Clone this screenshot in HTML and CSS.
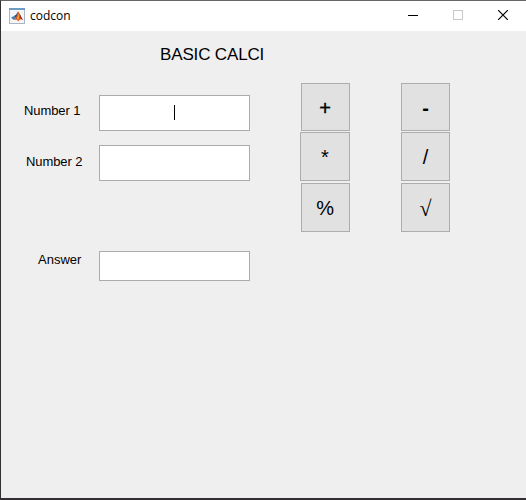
FILE: index.html
```
<!DOCTYPE html>
<html lang="en">
<head>
<meta charset="utf-8">
<title>codcon</title>
<link rel="stylesheet" href="styles.css">
</head>
<body>
<div class="window">
  <header class="titlebar">
    <svg class="app-icon" width="16" height="16" viewBox="0 0 16 16">
      <rect x=".5" y=".5" width="15" height="15" fill="#f3f5f7" stroke="#a9b5c2"/>
      <rect x="0" y="0" width="16" height="2" fill="#6d9cc4"/>
      <path d="M2 9.5 5 8l2 2-2.2 2z" fill="#3d7fb5"/>
      <path d="M5 8 7 6.8 9 3.5 8.5 8 7 10z" fill="#284a78"/>
      <path d="M9 3.2C10.5 4.5 11.5 9 14 12 12 10.7 11 11 9.2 13.5 8.5 11.7 7.5 11.5 4.8 12 7 10.5 8 7.5 9 3.2z" fill="#d9541e"/>
      <path d="M9.3 5 10 9.5 9.2 12.5 8 10.5z" fill="#f5a43a"/>
      <path d="M10.6 5.5 12.5 9.5 14 12 11.5 10.5z" fill="#8e261d"/>
    </svg>
    <span class="title">codcon</span>
    <div class="controls">
      <svg width="10" height="10" shape-rendering="crispEdges"><path d="M0 5.5h10" stroke="#000"/></svg>
      <svg width="10" height="10" shape-rendering="crispEdges"><rect x=".5" y=".5" width="9" height="9" fill="none" stroke="#c8c8c8"/></svg>
      <svg width="10" height="10"><path d="M0 0 10 10M10 0 0 10" stroke="#000" stroke-width="1.2"/></svg>
    </div>
  </header>
  <main class="client">
    <h1 class="heading">BASIC CALCI</h1>
    <div class="panel">
      <div class="form">
        <div class="field"><label class="label">Number 1</label><div class="input"><span class="caret"></span></div></div>
        <div class="field second"><label class="label">Number 2</label><div class="input"></div></div>
        <div class="field answer"><label class="label">Answer</label><div class="input"></div></div>
      </div>
      <div class="keypad">
        <button class="key plus"><span>+</span></button>
        <button class="key minus"><span>-</span></button>
        <button class="key wide"><span>*</span></button>
        <button class="key"><span>/</span></button>
        <button class="key last percent"><span>%</span></button>
        <button class="key last root"><span>√</span></button>
      </div>
    </div>
  </main>
</div>
</body>
</html>
```

FILE: styles.css
```
* { box-sizing: border-box; }
body { margin: 0; font-family: "Liberation Sans", Arial, sans-serif; color: #000; }
.window {
  height: 500px;
  border-top: 1px solid #666;
  border-left: 1px solid #332f33;
  border-bottom: 2px solid #332f33;
  background: #efefef;
}
.titlebar {
  display: flex;
  align-items: center;
  height: 30px;
  padding: 0 18px 0 8px;
  background: #fff;
}
.title {
  margin-left: 5px;
  font: 12px/16px "Open Sans", "Noto Sans", sans-serif;
}
.controls { display: flex; gap: 35px; margin: 0 0 2px auto; }
.controls svg { display: block; }
.heading {
  margin: 0;
  padding: 14px 0 0 159px;
  height: 52px;
  font-size: 17px;
  line-height: 20px;
  letter-spacing: -0.15px;
  font-weight: 400;
}
.panel { display: flex; }
.form { width: 249px; padding-top: 12px; }
.field { display: flex; height: 36px; }
.label {
  width: 98px;
  padding: 8px 0 0 23px;
  font-size: 13px;
  line-height: 16px;
  letter-spacing: -0.1px;
}
.input {
  display: flex;
  justify-content: center;
  align-items: center;
  width: 151px;
  border: 1px solid #ababae;
  background: #fff;
}
.caret { width: 1px; height: 15px; margin-bottom: 1px; background: #000; }
.second { margin-top: 14px; }
.second .label { padding: 9px 0 0 25px; }
.answer { height: 30px; margin-top: 70px; }
.answer .label { padding: 1px 0 0 37px; letter-spacing: 0; }
.keypad {
  display: grid;
  grid-template-columns: 49px 49px;
  grid-template-rows: 48px 49px 49px;
  column-gap: 51px;
  row-gap: 1px;
  margin-left: 51px;
}
.key {
  padding: 0;
  border: 1px solid #adadad;
  background: #e1e1e1;
  color: #000;
  font: 20px/24px "Liberation Sans", Arial, sans-serif;
}
.key span { display: block; }
.plus { padding-right: 1px; -webkit-text-stroke: 0.4px #000; }
.plus span { padding-top: 2px; }
.minus { font-weight: 700; }
.minus span { padding-top: 2px; }
.wide { margin-left: -1px; }
.last { position: relative; top: 1px; }
.percent { padding-right: 1px; letter-spacing: -0.5px; }
.root { font-family: "Liberation Serif", "Times New Roman", serif; font-size: 22px; }
.root span { padding-top: 2px; }
```
